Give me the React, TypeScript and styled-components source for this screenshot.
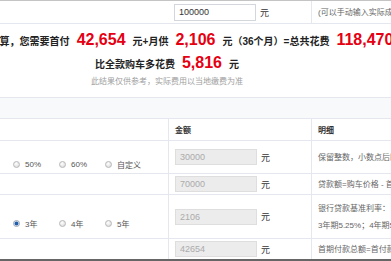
import styled, { createGlobalStyle } from "styled-components";

const GlobalStyle = createGlobalStyle`
  html, body {
    margin: 0;
    padding: 0;
    background: #fff;
  }
  body {
    font-family: "Liberation Sans", "Noto Sans CJK SC", sans-serif;
    color: #333;
  }
  * {
    box-sizing: border-box;
  }
`;

const Page = styled.div`
  width: 391px;
  height: 261px;
  overflow: hidden;
`;

const PriceRow = styled.div`
  display: grid;
  grid-template-columns: 168px 143px 1fr;
  height: 24px;
  border-top: 1px solid #c4c4c4;
  border-bottom: 1px solid #e4e7ee;
`;

const Summary = styled.div`
  display: flex;
  flex-direction: column;
  align-items: center;
  height: 73px;
  padding: 7px 57px 0 0;
`;

const Line = styled.div<{ $shift?: number }>`
  display: flex;
  align-items: baseline;
  height: 18px;
  line-height: 18px;
  white-space: nowrap;
  font-size: 10px;
  font-weight: bold;
  color: #222;
  margin-left: ${(p) => p.$shift ?? 0}px;
  & + & {
    margin-top: 5px;
  }
`;

const Amount = styled.span`
  color: #e50012;
  font-size: 16px;
  font-weight: bold;
  margin: 0 7px;
`;

const Note = styled.div`
  margin-top: 4px;
  font-size: 8px;
  line-height: 12px;
  color: #a0a0a0;
  white-space: nowrap;
`;

const Band = styled.div`
  height: 21px;
  border-top: 1px solid #e4e7ee;
  background: #f8f9fb;
`;

const Row = styled.div<{ $h: number; $last?: boolean }>`
  display: grid;
  grid-template-columns: 168px 143px 1fr;
  height: ${(p) => p.$h}px;
  border-top: 1px solid #e4e7ee;
  border-bottom: ${(p) => (p.$last ? "2px solid #666" : "none")};
`;

const Cell = styled.div<{ $divider?: boolean }>`
  display: flex;
  align-items: center;
  padding-left: 6px;
  border-left: ${(p) => (p.$divider ? "1px solid #e4e7ee" : "none")};
  min-width: 0;
  overflow: hidden;
`;

const HeadText = styled.span`
  font-size: 8px;
  font-weight: bold;
  color: #333;
`;

const Options = styled.div`
  display: grid;
  grid-template-columns: repeat(3, 46px);
  align-items: center;
  align-content: center;
  padding: 14px 0 0 13px;
`;

const Option = styled.label`
  display: flex;
  align-items: center;
  font-size: 8px;
  color: #555;
  white-space: nowrap;
`;

const Radio = styled.input.attrs({ type: "radio" })`
  appearance: none;
  margin: 0 5px 0 0;
  width: 7px;
  height: 7px;
  border-radius: 50%;
  border: 1px solid #b8b8b8;
  background: radial-gradient(circle at 40% 35%, #fff, #d4d4d4);
  &:checked {
    border-color: #9aa7b6;
    background: radial-gradient(circle, #1d5fae 0 1.6px, #d3dbe5 2.2px);
  }
`;

const MoneyInput = styled.input<{ $locked?: boolean }>`
  width: 82px;
  height: ${(p) => (p.$locked ? 16 : 17)}px;
  padding: 0 0 0 4px;
  border: 1px solid ${(p) => (p.$locked ? "#dedede" : "#d3d6db")};
  background: ${(p) => (p.$locked ? "#ececec" : "#fff")};
  color: ${(p) => (p.$locked ? "#ababab" : "#333")};
  font-family: "Liberation Sans", sans-serif;
  font-size: 9px;
  outline: none;
`;

const Unit = styled.span`
  margin-left: 4px;
  font-size: 9px;
  color: #333;
`;

const Detail = styled.div`
  font-size: 8px;
  line-height: 17px;
  color: #666;
  white-space: nowrap;
`;

const downOptions = ["50%", "60%", "自定义"];
const termOptions = ["3年", "4年", "5年"];

export default function App() {
  return (
    <Page>
      <GlobalStyle />
      <PriceRow>
        <Cell />
        <Cell>
          <MoneyInput defaultValue="100000" />
          <Unit>元</Unit>
        </Cell>
        <Cell $divider>
          <Detail>(可以手动输入实际成交价格)</Detail>
        </Cell>
      </PriceRow>

      <Summary>
        <Line $shift={26}>
          根据您的估算，您需要首付<Amount>42,654</Amount>元+月供
          <Amount>2,106</Amount>元（36个月）=总共花费<Amount>118,470</Amount>元
        </Line>
        <Line>
          比全款购车多花费<Amount>5,816</Amount>元
        </Line>
        <Note>此结果仅供参考，实际费用以当地缴费为准</Note>
      </Summary>

      <Band />

      <Row $h={22}>
        <Cell />
        <Cell $divider>
          <HeadText>金额</HeadText>
        </Cell>
        <Cell $divider>
          <HeadText>明细</HeadText>
        </Cell>
      </Row>

      <Row $h={33}>
        <Options>
          {downOptions.map((o) => (
            <Option key={o}>
              <Radio name="down" />
              {o}
            </Option>
          ))}
        </Options>
        <Cell $divider>
          <MoneyInput $locked readOnly defaultValue="30000" />
          <Unit>元</Unit>
        </Cell>
        <Cell $divider>
          <Detail>保留整数，小数点后四舍五入</Detail>
        </Cell>
      </Row>

      <Row $h={21}>
        <Cell />
        <Cell $divider>
          <MoneyInput $locked readOnly defaultValue="70000" />
          <Unit>元</Unit>
        </Cell>
        <Cell $divider>
          <Detail>贷款额=购车价格 - 首付款</Detail>
        </Cell>
      </Row>

      <Row $h={44}>
        <Options>
          {termOptions.map((o, i) => (
            <Option key={o}>
              <Radio name="term" defaultChecked={i === 0} />
              {o}
            </Option>
          ))}
        </Options>
        <Cell $divider>
          <MoneyInput $locked readOnly defaultValue="2106" />
          <Unit>元</Unit>
        </Cell>
        <Cell $divider>
          <div>
            <Detail>银行贷款基准利率：</Detail>
            <Detail>3年期5.25%；4年期5.25%；5年期5.25%</Detail>
          </div>
        </Cell>
      </Row>

      <Row $h={23} $last>
        <Cell />
        <Cell $divider>
          <MoneyInput $locked readOnly defaultValue="42654" />
          <Unit>元</Unit>
        </Cell>
        <Cell $divider>
          <Detail>首期付款总额=首付款+必要花费+商业保险</Detail>
        </Cell>
      </Row>
    </Page>
  );
}
